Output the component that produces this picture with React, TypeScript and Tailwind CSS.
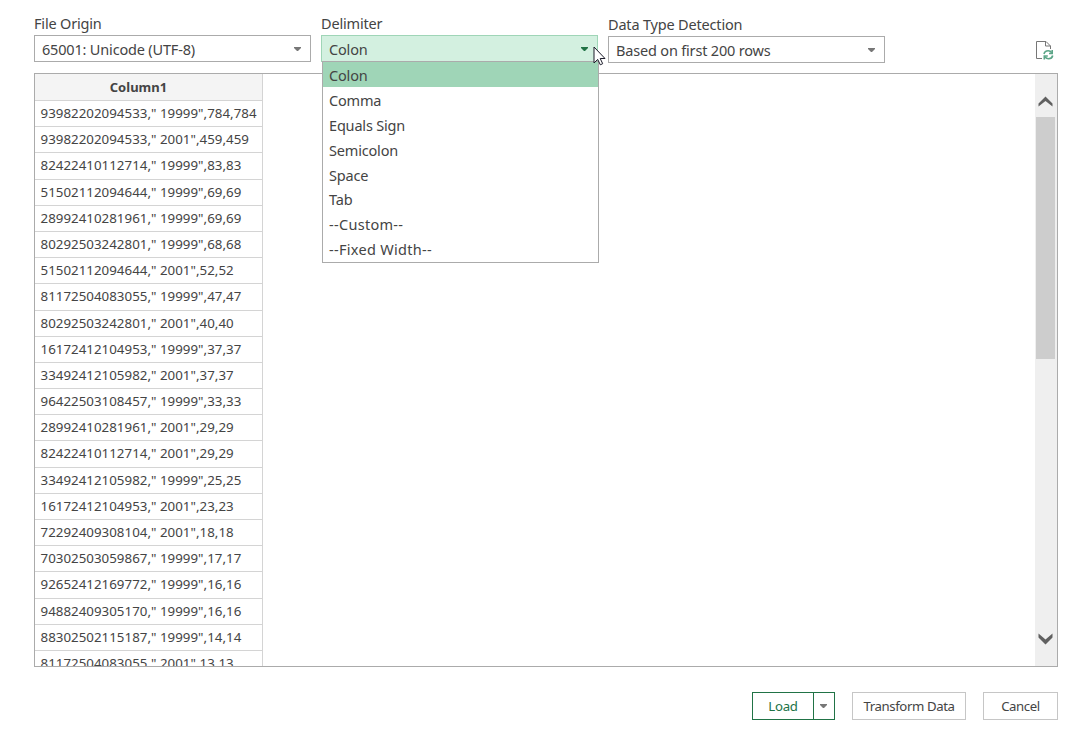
import React, { useState } from 'react';
import clsx from 'clsx';

const delimiters = [
  'Colon',
  'Comma',
  'Equals Sign',
  'Semicolon',
  'Space',
  'Tab',
  '--Custom--',
  '--Fixed Width--',
];

const rows = [
  '93982202094533," 19999",784,784',
  '93982202094533," 2001",459,459',
  '82422410112714," 19999",83,83',
  '51502112094644," 19999",69,69',
  '28992410281961," 19999",69,69',
  '80292503242801," 19999",68,68',
  '51502112094644," 2001",52,52',
  '81172504083055," 19999",47,47',
  '80292503242801," 2001",40,40',
  '16172412104953," 19999",37,37',
  '33492412105982," 2001",37,37',
  '96422503108457," 19999",33,33',
  '28992410281961," 2001",29,29',
  '82422410112714," 2001",29,29',
  '33492412105982," 19999",25,25',
  '16172412104953," 2001",23,23',
  '72292409308104," 2001",18,18',
  '70302503059867," 19999",17,17',
  '92652412169772," 19999",16,16',
  '94882409305170," 19999",16,16',
  '88302502115187," 19999",14,14',
  '81172504083055," 2001",13,13',
];

const Caret: React.FC<{ className?: string }> = ({ className }) => (
  <svg className={clsx('w-[7px] h-1 shrink-0', className)} viewBox="0 0 7 4" fill="currentColor">
    <path d="M0 0h7v1L4 4H3L0 1z" />
  </svg>
);

interface SelectProps {
  label: string;
  value: string;
  open?: boolean;
  className?: string;
  onClick?: () => void;
  children?: React.ReactNode;
}

const Select: React.FC<SelectProps> = ({ label, value, open, className, onClick, children }) => (
  <div className={clsx('relative w-[277px]', className)}>
    <div className="h-[21px] leading-[19px] whitespace-nowrap">{label}</div>
    <button
      onClick={onClick}
      className={clsx(
        'flex items-center justify-between w-full h-[27px] pl-[7px] pr-[9px] border',
        open ? 'bg-[#d3f0e0] border-[#9fd5b7]' : 'bg-white border-[#ababab]'
      )}
    >
      <span className="pt-[2px] whitespace-nowrap">{value}</span>
      <Caret className={open ? 'text-[#217346]' : 'text-[#777777]'} />
    </button>
    {children}
  </div>
);

const App: React.FC = () => {
  const [isOpen, setIsOpen] = useState(true);
  const [delimiter, setDelimiter] = useState('Colon');

  return (
    <div className="w-[1084px] h-[751px] bg-white overflow-hidden pl-[34px] pr-[26px] pt-[14px] font-['Noto_Sans',sans-serif] text-[14.5px] tracking-[-0.18px] text-[#444444]">
      {/* Import options */}
      <div className="flex items-start h-[59px]">
        <Select label="File Origin" value="65001: Unicode (UTF-8)" />
        <Select
          label="Delimiter"
          value={delimiter}
          open={isOpen}
          onClick={() => setIsOpen(!isOpen)}
          className="ml-[10px] z-10"
        >
          {isOpen && (
            <ul className="absolute left-px top-[47px] w-[277px] h-[202px] bg-white border border-[#ababab]">
              {delimiters.map((item) => (
                <li
                  key={item}
                  onClick={() => {
                    setDelimiter(item);
                    setIsOpen(false);
                  }}
                  className={clsx(
                    'h-[24.9px] pl-[6px] leading-[27px] whitespace-nowrap',
                    item === delimiter && 'bg-[#9fd5b7]',
                    item.startsWith('--') && 'tracking-[0.3px]'
                  )}
                >
                  {item}
                </li>
              ))}
            </ul>
          )}
          {/* Mouse pointer */}
          <svg className="absolute left-[272px] top-[32px] w-[13px] h-[20px]" viewBox="0 0 13 20">
            <path
              d="M1 1v16l3.7-3.6 2.6 5.4 2.4-1.1-2.5-5.2H12z"
              fill="#fff"
              stroke="#1c1c2a"
              strokeWidth="1"
            />
          </svg>
        </Select>
        <Select
          label="Data Type Detection"
          value="Based on first 200 rows"
          className="ml-[10px] mt-px"
        />
        <button className="ml-auto mr-[4px] mt-[26px]">
          <svg className="w-[18px] h-[20px]" viewBox="0 0 18 20" fill="none">
            <path d="M6 18.5H.5V1.500H10l4.500 4.500V9" stroke="#777" />
            <path d="M9.500 1.500V6h5" stroke="#777" />
            <g stroke="#5ba587" strokeWidth="1.600">
              <path d="M8 14c.4-2 2.100-3.200 4.200-3.200 1.500 0 2.700.7 3.500 1.900" />
              <path d="M16.200 10v3.500H13" />
              <path d="M16.700 15.500c-.4 2-2.100 3.200-4.200 3.200-1.500 0-2.700-.7-3.500-1.900" />
              <path d="M8.300 19.500V16h3.500" />
            </g>
          </svg>
        </button>
      </div>

      {/* Preview */}
      <div className="flex justify-between h-[594px] border border-[#ababab] overflow-hidden">
        <div className="w-[228px] text-[13.3px] tracking-[0.03px]">
          <div className="h-[27px] leading-[27px] pr-[20px] bg-[#f4f4f4] border-r border-b border-[#d4d4d4] text-center text-[13px] font-bold">
            Column1
          </div>
          {rows.map((row) => (
            <div
              key={row}
              className="h-[26.19px] leading-[25.3px] pl-[5.5px] border-r border-b border-[#d4d4d4] whitespace-pre"
            >
              {row}
            </div>
          ))}
        </div>
        <div className="flex flex-col w-[22px] bg-[#efefef]">
          <svg className="w-[15px] h-[12px] ml-[3px] mt-[22px] shrink-0" viewBox="0 0 15 12">
            <path d="M0.500 10.500v-3L7.500.5l7 7v3l-7-5.500z" fill="#606060" />
          </svg>
          <div className="w-[19px] h-[242px] ml-px mt-[9px] bg-[#cdcdcd]" />
          <svg className="w-[15px] h-[12px] ml-[3px] mt-auto mb-[21px] shrink-0" viewBox="0 0 15 12">
            <path d="M0.500 0.500v4l7 7 7-7v-4l-7 6z" fill="#606060" />
          </svg>
        </div>
      </div>

      {/* Actions */}
      <div className="flex justify-end mt-[25px] h-[28px] text-[13.2px] tracking-[-0.4px]">
        <div className="flex w-[83px] border border-[#217346] text-[#217346]">
          <button className="w-[61px] pt-[2px] border-r border-[#217346] tracking-[-0.2px]">Load</button>
          <button className="flex flex-1 items-center justify-center pr-px text-[#777777]">
            <Caret />
          </button>
        </div>
        <button className="ml-[17px] w-[114px] pt-[2px] border border-[#c6c6c6] whitespace-nowrap">
          Transform Data
        </button>
        <button className="ml-[17px] w-[75px] pt-[2px] border border-[#c6c6c6]">Cancel</button>
      </div>
    </div>
  );
};

export default App;
